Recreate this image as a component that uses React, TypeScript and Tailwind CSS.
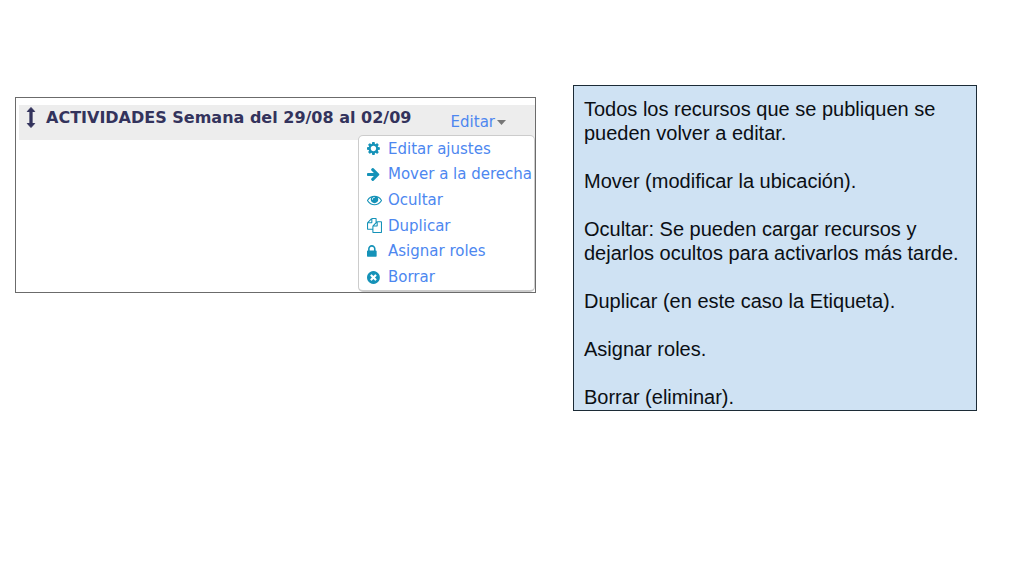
type IconProps = { path: string; className?: string; viewBox?: string };

function Icon({ path, className = "size-[15px]", viewBox = "0 0 1792 1792" }: IconProps) {
  return (
    <svg viewBox={viewBox} className={`shrink-0 fill-current ${className}`} aria-hidden="true">
      <path d={path} />
    </svg>
  );
}

const actions = [
  {
    label: "Editar ajustes",
    viewBox: "128 0 1792 1792",
    path: "M1216 896q0-133-93.500-226.500t-226.500-93.500-226.500 93.500-93.500 226.500 93.500 226.500 226.500 93.500 226.500-93.500 93.500-226.500zm448-109v222q0 12-8 23t-20 13l-185 28q-19 54-39 91 35 50 107 138 10 12 10 25t-9 23q-27 37-99 108t-94 71q-12 0-26-9l-138-108q-44 23-91 38-16 136-29 186-7 28-36 28h-222q-14 0-24.500-8.500t-11.500-21.500l-28-184q-49-16-90-37l-141 107q-10 9-25 9-14 0-25-11-126-114-165-168-7-10-7-23 0-12 8-23 15-21 51-66.500t54-70.500q-27-50-41-99l-183-27q-13-2-21-12.500t-8-23.500v-222q0-12 8-23t19-13l186-28q14-46 39-92-40-57-107-138-10-12-10-24 0-10 9-23 26-36 98.500-107.500t94.500-71.500q13 0 26 10l138 107q44-23 91-38 16-136 29-186 7-28 36-28h222q14 0 24.500 8.500t11.500 21.500l28 184q49 16 90 37l142-107q9-9 24-9 13 0 25 10 129 119 165 170 7 8 7 22 0 12-8 23-15 21-51 66.500t-54 70.500q26 50 41 98l183 28q13 2 21 12.500t8 23.500z",
  },
  {
    label: "Mover a la derecha",
    viewBox: "128 64 1792 1792",
    path: "M1600 960q0 54-37 91l-651 651q-39 37-91 37-51 0-90-37l-75-75q-38-38-38-91t38-91l293-293h-704q-52 0-84.500-37.500t-32.500-90.500v-128q0-53 32.500-90.500t84.500-37.500h704l-293-294q-38-36-38-90t38-90l75-75q38-38 90-38 53 0 91 38l651 651q37 35 37 90z",
  },
  {
    label: "Ocultar",
    viewBox: "0 64 1792 1792",
    path: "M1664 960q-152-236-381-353 61 104 61 225 0 185-131.500 316.500t-316.500 131.500-316.500-131.500-131.500-316.500q0-121 61-225-229 117-381 353 133 205 333.500 326.500t434.500 121.500 434.500-121.500 333.500-326.500zm-720-384q0-20-14-34t-34-14q-125 0-214.500 89.500t-89.500 214.500q0 20 14 34t34 14 34-14 14-34q0-86 61-147t147-61q20 0 34-14t14-34zm848 384q0 34-20 69-140 230-376.500 368.500t-499.500 138.500-499.500-139-376.500-368q-20-35-20-69t20-69q140-229 376.500-368t499.500-139 499.500 139 376.500 368q20 35 20 69z",
  },
  {
    label: "Duplicar",
    viewBox: "0 0 1792 1792",
    path: "M1696 384q40 0 68 28t28 68v1216q0 40-28 68t-68 28h-960q-40 0-68-28t-28-68v-288h-544q-40 0-68-28t-28-68v-672q0-40 20-88t48-76l408-408q28-28 76-48t88-20h416q40 0 68 28t28 68v328q68-40 128-40h416zm-544 213l-299 299h299v-299zm-640-384l-299 299h299v-299zm196 647l316-316v-416h-384v416q0 40-28 68t-68 28h-416v640h512v-256q0-40 20-88t48-76zm956 804v-1152h-384v416q0 40-28 68t-68 28h-416v640h896z",
  },
  {
    label: "Asignar roles",
    viewBox: "320 0 1792 1792",
    path: "M640 768h512v-192q0-106-75-181t-181-75-181 75-75 181v192zm832 96v576q0 40-28 68t-68 28h-960q-40 0-68-28t-28-68v-576q0-40 28-68t68-28h32v-192q0-184 132-316t316-132 316 132 132 316v192h32q40 0 68 28t28 68z",
  },
  {
    label: "Borrar",
    viewBox: "128 0 1792 1792",
    path: "M1277 1122q0-26-19-45l-181-181 181-181q19-19 19-45 0-27-19-46l-90-90q-19-19-46-19-26 0-45 19l-181 181-181-181q-19-19-45-19-27 0-46 19l-90 90q-19 19-19 46 0 26 19 45l181 181-181 181q-19 19-19 45 0 27 19 46l90 90q19 19 46 19 26 0 45-19l181-181 181 181q19 19 45 19 27 0 46-19l90-90q19-19 19-46zm387-226q0 209-103 385.500t-279.500 279.500-385.500 103-385.500-103-279.500-279.500-103-385.500 103-385.500 279.500-279.500 385.500-103 385.500 103 279.500 279.500 103 385.500z",
  },
];

const notes = [
  "Todos los recursos que se publiquen se pueden volver a editar.",
  "Mover (modificar la ubicación).",
  "Ocultar: Se pueden cargar recursos y dejarlos ocultos para activarlos más tarde.",
  "Duplicar (en este caso la Etiqueta).",
  "Asignar roles.",
  "Borrar (eliminar).",
];

function ActivityPanel() {
  return (
    <section className="mt-3 flex flex-col border border-[#6b6b6b] pt-[7px] pl-[3px] font-['DejaVu_Sans',sans-serif] text-[15px]">
      <header className="flex h-[35px] items-start justify-between bg-[#ededed] pr-[29px] pl-[7px]">
        <div className="flex items-center gap-2.5 text-[#33335c]">
          <svg viewBox="0 0 10 24" className="h-[25px] w-2.5 shrink-0 fill-current stroke-current" strokeWidth="1" strokeLinejoin="round" aria-hidden="true">
            <path d="M5 2 8.700 6H6.100V18H8.700L5 22 1.300 18H3.900V6H1.300Z" />
          </svg>
          <h1 className="text-base font-bold whitespace-nowrap">ACTIVIDADES Semana del 29/08 al 02/09</h1>
        </div>
        <button type="button" className="mt-1.5 flex items-center gap-0.5 text-[#4d87f0]">
          Editar
          <svg viewBox="0 0 9 5" className="h-[5px] w-[9px] fill-[#777777]" aria-hidden="true">
            <path d="M0 0h9L4.500 5z" />
          </svg>
        </button>
      </header>
      <ul className="-mt-[5px] grid min-h-[157px] grid-rows-6 self-end rounded-[5px] border border-b-2 border-[#cccccc] bg-white pr-0.5 pl-2">
        {actions.map(({ label, path, viewBox }) => (
          <li key={label} className="flex items-center">
            <a href="#" className="flex items-center gap-1.5 whitespace-nowrap text-[#4d87f0]">
              <Icon path={path} viewBox={viewBox} className="size-[15px] text-[#1592b8]" />
              {label}
            </a>
          </li>
        ))}
      </ul>
    </section>
  );
}

export default function App() {
  return (
    <main className="grid min-h-screen grid-cols-[521fr_404fr] items-start gap-[37px] bg-white pt-[85px] pr-[47px] pl-[15px]">
      <ActivityPanel />
      <aside className="space-y-6 border border-[#1c2b36] bg-[#cfe2f3] px-2.5 pt-[11px] pb-px font-['Liberation_Sans',Arial,sans-serif] text-xl/6 text-[#0b0f14]">
        {notes.map((note) => (
          <p key={note}>{note}</p>
        ))}
      </aside>
    </main>
  );
}
